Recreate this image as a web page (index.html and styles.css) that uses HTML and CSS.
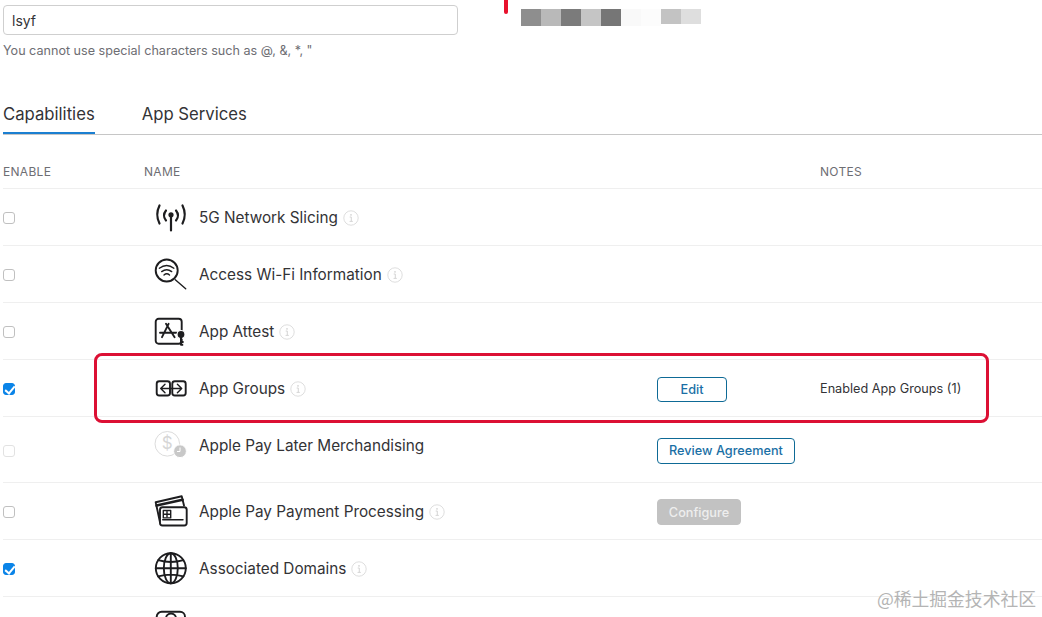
FILE: index.html
```html
<!DOCTYPE html>
<html lang="en">
<head>
<meta charset="utf-8">
<title>Capabilities</title>
<link rel="stylesheet" href="styles.css">
</head>
<body>
<svg class="defs" width="0" height="0" aria-hidden="true">
  <symbol id="info" viewBox="0 0 16 16">
    <circle cx="8" cy="8" r="7.2" fill="none" stroke="#dedede" stroke-width="1"/>
    <path d="M6.7 7h1.6v4.2M6.6 11.4h3.2" fill="none" stroke="#d0d0d0" stroke-width="0.9"/>
    <circle cx="8" cy="4.9" r="0.8" fill="#d0d0d0"/>
  </symbol>
</svg>
<main class="page">
  <section class="top">
    <div class="field">
      <input class="name-input" type="text" value="lsyf">
      <p class="hint">You cannot use special characters such as @, &amp;, *, "</p>
    </div>
    <span class="mark-stub"></span>
    <div class="mosaic">
      <i class="m1"></i><i class="m2"></i><i class="m3"></i><i class="m4"></i><i class="m5"></i><i class="m6"></i><i class="m7"></i><i class="m8"></i><i class="m9"></i>
    </div>
  </section>

  <nav class="tabs">
    <a class="tab active">Capabilities</a>
    <a class="tab">App Services</a>
  </nav>

  <div class="head">
    <span>ENABLE</span>
    <span>NAME</span>
    <span>NOTES</span>
  </div>

  <div class="row row-grid">
    <input class="check" type="checkbox">
    <svg class="icon" viewBox="0 0 34 34"><g class="ln ln-bold">
      <path d="M5.5 4.5Q1 13.5 5.5 22.5M28.5 4.5Q33 13.5 28.5 22.5M12 9.5Q8 14.5 12 19.5M22 9.5Q26 14.5 22 19.5M17 14v15.5"/></g>
      <circle class="fl" cx="17" cy="13.8" r="2.6"/>
    </svg>
    <div class="name">5G Network Slicing <svg class="info"><use href="#info"/></svg></div>
  </div>

  <div class="row row-grid">
    <input class="check" type="checkbox">
    <svg class="icon" viewBox="0 0 34 34"><g class="ln">
      <circle cx="12.7" cy="12.5" r="11"/>
      <path class="thin" d="M21.3 21.8L31.7 30.8"/>
      <path class="thin" d="M5.3 10.2Q12.7 4.8 19.9 10.2M7.7 13.6Q12.7 9.8 17.7 13.6M10 17Q12.7 14.6 15.5 17"/></g>
    </svg>
    <div class="name">Access Wi-Fi Information <svg class="info"><use href="#info"/></svg></div>
  </div>

  <div class="row row-grid">
    <input class="check" type="checkbox">
    <svg class="icon" viewBox="0 0 34 34"><g class="ln">
      <rect x="1.7" y="3.8" width="26" height="25" rx="3"/>
      <path d="M14.6 8.8L8 22.2M12 8.8L20.6 22.2M6 17.8H22.6"/></g>
      <circle class="fl halo" cx="27" cy="19.5" r="4"/>
      <path class="key" d="M27 21v9.5M27 27h2.6M27 29.8h2.2"/>
    </svg>
    <div class="name">App Attest <svg class="info"><use href="#info"/></svg></div>
  </div>

  <div class="row row-grid">
    <input class="check" type="checkbox" checked>
    <svg class="icon" viewBox="0 0 34 34"><g class="ln">
      <rect x="2.7" y="9.2" width="13.3" height="14.3" rx="2.5"/>
      <rect x="18.3" y="9.2" width="13.4" height="14.3" rx="2.5"/>
      <path class="thin" d="M6.7 16.5H27.7M11 12.2L6.7 16.5L11 20.8M23.4 12.2L27.7 16.5L23.4 20.8"/></g>
    </svg>
    <div class="name">App Groups <svg class="info"><use href="#info"/></svg></div>
    <div class="action"><button class="btn edit">Edit</button></div>
    <div class="notes">Enabled App Groups (1)</div>
  </div>

  <div class="row row-grid row-tall">
    <input class="check check-off" type="checkbox" disabled>
    <svg class="icon" viewBox="0 0 34 34">
      <circle cx="13.3" cy="16.8" r="12.3" fill="none" stroke="#dcdcdc" stroke-width="1"/>
      <text class="dollar" x="13.3" y="22">$</text>
      <circle cx="26" cy="24.2" r="6.4" fill="#c8c8c8" stroke="#fff" stroke-width="1"/>
      <path d="M26 20.5v4h-3" fill="none" stroke="#fff" stroke-width="1"/>
    </svg>
    <div class="name">Apple Pay Later Merchandising</div>
    <div class="action"><button class="btn review">Review Agreement</button></div>
  </div>

  <div class="row row-grid">
    <input class="check" type="checkbox">
    <svg class="icon" viewBox="0 0 34 34"><g class="ln">
      <path d="M6 27.2L1.7 7.2L27.7 1.2L30 10.5"/>
      <path d="M2.6 10.6L28.6 4.8" stroke-width="2.6"/>
      <rect class="bg" x="6" y="12.2" width="26.7" height="18.3" rx="2.5"/>
      <path class="thin" d="M8.7 24.8H29"/>
      <rect class="thin" x="9.3" y="15.5" width="7.4" height="7.4"/>
      <path class="thin" d="M13 16.5v5.4M10.3 19.2h5.4"/></g>
    </svg>
    <div class="name">Apple Pay Payment Processing <svg class="info"><use href="#info"/></svg></div>
    <div class="action"><button class="btn btn-off" disabled>Configure</button></div>
  </div>

  <div class="row row-grid">
    <input class="check" type="checkbox" checked>
    <svg class="icon" viewBox="0 0 34 34"><g class="ln">
      <circle cx="16.8" cy="16.3" r="15"/>
      <ellipse cx="16.8" cy="16.3" rx="7" ry="15"/>
      <path d="M16.8 1.3v30M1.8 16.3h30M4.2 8.2Q16.8 11.8 29.4 8.2M4.2 24.4Q16.8 20.8 29.4 24.4"/></g>
    </svg>
    <div class="name">Associated Domains <svg class="info"><use href="#info"/></svg></div>
  </div>

  <div class="row row-grid">
    <span></span>
    <svg class="icon" viewBox="0 0 34 34"><g class="ln">
      <rect x="2.7" y="2.8" width="28.3" height="26" rx="5"/>
      <circle cx="17" cy="9.5" r="5"/></g>
    </svg>
  </div>

  <div class="callout"></div>
  <div class="watermark">@稀土掘金技术社区</div>
</main>
</body>
</html>
```

FILE: styles.css
```css
* { box-sizing: border-box; }

html, body {
  margin: 0;
  height: 617px;
  overflow: hidden;
  background: #fff;
}

body {
  font-family: Inter, "Noto Sans CJK SC", sans-serif;
  color: #333336;
}

.defs { position: absolute; }

.page {
  position: relative;
  height: 617px;
  padding-left: 3px;
  overflow: hidden;
}

/* top strip */
.top {
  display: flex;
  align-items: flex-start;
  height: 62px;
  padding-top: 5px;
}

.field { width: 455px; }

.name-input {
  display: block;
  width: 100%;
  height: 30px;
  padding: 0 8px;
  border: 1px solid #cfcfcf;
  border-radius: 4px;
  font: 14px Inter, sans-serif;
  color: #333336;
  background: #fff;
}

.hint {
  margin: 8px 0 0;
  font-size: 12.6px;
  line-height: 15px;
  color: #6e6e73;
  white-space: nowrap;
}

.mark-stub {
  width: 4px;
  height: 14px;
  margin: -5px 0 0 46px;
  border-radius: 0 0 2px 2px;
  background: #e8112d;
}

.mosaic {
  display: flex;
  margin: 4px 0 0 13px;
  height: 17px;
}

.mosaic i { display: block; width: 20px; }
.m1 { background: #8e8e8e; }
.m2 { background: #b9b9b9; }
.m3 { background: #7b7b7b; }
.m4 { background: #c5c5c5; }
.m5 { background: #767676; }
.m6 { background: #f9f9f9; }
.m7 { background: #fcfcfc; }
.m8 { background: #c3c3c3; height: 15px; }
.m9 { background: #dedede; height: 15px; }

/* tabs */
.tabs {
  display: flex;
  gap: 47px;
  height: 73px;
  padding-top: 33px;
  margin-right: -3px;
  background: linear-gradient(#c6c6c6, #c6c6c6) left 72px / 100% 1px no-repeat;
}

.tab {
  height: 39px;
  font-size: 16.7px;
  line-height: 38px;
  color: #333336;
}

.tab.active {
  border-bottom: 2px solid #1b7fd1;
}

/* table */
.row-grid {
  display: grid;
  grid-template-columns: 141px 55px 458px 163px 1fr;
  align-items: center;
}

.head {
  display: grid;
  grid-template-columns: 141px 676px 1fr;
  align-items: center;
  height: 53px;
  padding-top: 19px;
  font-size: 12px;
  letter-spacing: 0.3px;
  color: #6e6e73;
}

.row {
  height: 57px;
  padding-top: 2px;
  border-top: 1px solid #efefef;
}

.row-tall { height: 66px; }

.check {
  appearance: none;
  position: relative;
  width: 12px;
  height: 12px;
  margin: 0;
  border: 1px solid #c0c0c0;
  border-radius: 3px;
  background: #fff;
}

.check:checked {
  border-color: #0a84e8;
  background: #0a84e8;
}

.check:checked::before {
  content: "";
  position: absolute;
  left: 3px;
  top: 0;
  width: 4px;
  height: 8px;
  border: solid #fff;
  border-width: 0 2px 2px 0;
  transform: rotate(40deg);
}

.check-off { border-color: #e2e2e2; }

.icon {
  display: block;
  width: 34px;
  height: 34px;
  margin-left: 10px;
  overflow: visible;
}

.ln {
  fill: none;
  stroke: #1d1d1f;
  stroke-width: 1.9;
  stroke-linecap: round;
  stroke-linejoin: round;
}

.ln-bold { stroke-width: 2.2; }
.ln .thin { stroke-width: 1.4; }
.ln .bg { fill: #fff; }
.fl { fill: #1d1d1f; }
.halo { stroke: #fff; stroke-width: 1.2; }
.key { fill: none; stroke: #1d1d1f; stroke-width: 2; }

.dollar {
  font: 17px Inter, sans-serif;
  fill: #d6d6d6;
  text-anchor: middle;
}

.name {
  display: flex;
  align-items: center;
  gap: 5px;
  margin-top: -1px;
  font-size: 15.3px;
  white-space: nowrap;
}

.info { width: 16px; height: 16px; }

.row-tall .icon { align-self: start; margin-top: 8px; }
.row-tall .name { align-self: start; margin-top: 17px; }

.action { display: flex; }

.btn {
  height: 26px;
  padding: 0;
  border: 1px solid #0e6a96;
  border-radius: 4px;
  background: #fff;
  font: 500 12.7px Inter, sans-serif;
  color: #1a6fa5;
  white-space: nowrap;
}

.edit { width: 70px; height: 25px; }
.review { width: 138px; }

.btn-off {
  width: 84px;
  border-color: #c2c2c2;
  background: #c2c2c2;
  color: #eee;
}

.notes {
  margin-top: -2px;
  font-size: 12.7px;
  color: #333336;
  white-space: nowrap;
}

/* overlays on the screenshot */
.callout {
  position: absolute;
  left: 94px;
  top: 353px;
  width: 895px;
  height: 70px;
  border: 3px solid #dc1034;
  border-radius: 8px;
}

.watermark {
  position: absolute;
  right: 6px;
  bottom: 6px;
  font: 17.8px "Noto Sans CJK SC", sans-serif;
  color: #b4b4b4;
  white-space: nowrap;
}
```
